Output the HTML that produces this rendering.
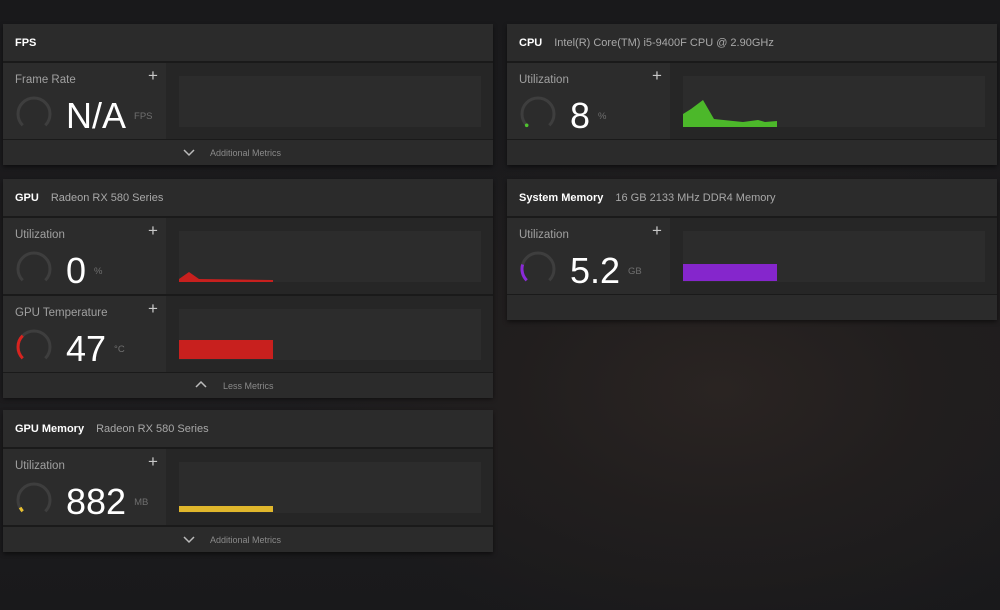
<!DOCTYPE html>
<html><head><meta charset="utf-8"><style>
*{margin:0;padding:0;box-sizing:border-box}
body{width:1000px;height:610px;overflow:hidden;font-family:"Liberation Sans",sans-serif;
background:radial-gradient(ellipse 420px 260px at 720px 390px,#2a2422 0%,#211e1e 50%,rgba(28,27,29,0) 100%),linear-gradient(#19191b,#1d1c1e 60%,#19191b);position:relative}
.p{position:absolute;width:490px;background:#1a1a1a;border-radius:2px;box-shadow:0 2px 4px rgba(0,0,0,.5)}
.h{position:absolute;left:0;right:0;top:0;height:37px;background:#2b2b2b;color:#fff;font-size:11px;font-weight:bold;padding:13px 0 0 12px}
.h span{font-weight:normal;color:#a8a8a8;margin-left:12px}
.r{position:absolute;left:0;right:0;height:76px;background:#262626}
.t{position:absolute;left:0;top:0;width:163px;height:76px;background:#2c2c2c}
.lb{position:absolute;left:12px;top:11px;font-size:11.5px;color:#a0a0a0}
.pl{position:absolute;left:145px;top:3px;font-size:17px;color:#c8c8c8;font-weight:300}
.g{position:absolute;left:13px;top:33px;width:36px;height:36px}
.v{position:absolute;left:63px;top:35px;font-size:36px;line-height:36px;color:#fff;white-space:nowrap}
.v small{font-size:9.5px;color:#6f6f6f;vertical-align:top;position:relative;top:1px;margin-left:8px}
.b{position:absolute;left:176px;top:13px;width:302px;height:51px;background:#2c2c2c}
.b svg{position:absolute;left:0;top:0}
.f{position:absolute;left:0;right:0;height:25px;background:#2b2b2b;font-size:9px;color:#8a8a8a}
.f .c{position:absolute;left:180px;top:7px;width:12px;height:10px}
.f .tx{position:absolute;left:207px;top:8px}
</style></head><body>

<!-- FPS -->
<div class="p" style="left:3px;top:24px;height:141px">
 <div class="h">FPS</div>
 <div class="r" style="top:39px"><div class="t"><div class="lb">Frame Rate</div><div class="pl">+</div>
  <svg class="g" viewBox="0 0 36 36"><path d="M6.7 29.3A16 16 0 1 1 29.3 29.3" fill="none" stroke="#3e3e3e" stroke-width="3"/></svg>
  <div class="v">N/A<small>FPS</small></div></div>
  <div class="b"></div></div>
 <div class="f" style="top:116px"><svg class="c" viewBox="0 0 12 10"><path d="M1 3l5 5 5-5" fill="none" stroke="#bbb" stroke-width="1.5"/></svg><div class="tx">Additional Metrics</div></div>
</div>

<!-- GPU -->
<div class="p" style="left:3px;top:179px;height:218px">
 <div class="h">GPU<span>Radeon RX 580 Series</span></div>
 <div class="r" style="top:39px"><div class="t"><div class="lb">Utilization</div><div class="pl">+</div>
  <svg class="g" viewBox="0 0 36 36"><path d="M6.7 29.3A16 16 0 1 1 29.3 29.3" fill="none" stroke="#3e3e3e" stroke-width="3"/></svg>
  <div class="v">0<small>%</small></div></div>
  <div class="b"><svg width="302" height="51"><polygon points="0,51 0,48 10,41 20,48 94,49 94,51" fill="#c8201e"/></svg></div></div>
 <div class="r" style="top:117px"><div class="t"><div class="lb">GPU Temperature</div><div class="pl">+</div>
  <svg class="g" viewBox="0 0 36 36"><path d="M6.7 29.3A16 16 0 1 1 29.3 29.3" fill="none" stroke="#3e3e3e" stroke-width="3"/><path d="M6.7 29.3A16 16 0 0 1 6.7 6.7" fill="none" stroke="#d8231f" stroke-width="3"/></svg>
  <div class="v">47<small>°C</small></div></div>
  <div class="b"><svg width="302" height="51"><rect x="0" y="31" width="94" height="19" fill="#c8201e"/></svg></div></div>
 <div class="f" style="top:194px"><svg class="c" viewBox="0 0 12 10" style="left:192px"><path d="M1 7l5-5 5 5" fill="none" stroke="#bbb" stroke-width="1.5"/></svg><div class="tx" style="left:220px">Less Metrics</div></div>
</div>

<!-- GPU Memory -->
<div class="p" style="left:3px;top:410px;height:142px">
 <div class="h">GPU Memory<span>Radeon RX 580 Series</span></div>
 <div class="r" style="top:39px"><div class="t"><div class="lb">Utilization</div><div class="pl">+</div>
  <svg class="g" viewBox="0 0 36 36"><path d="M6.7 29.3A16 16 0 1 1 29.3 29.3" fill="none" stroke="#3e3e3e" stroke-width="3"/><path d="M6.7 29.3A16 16 0 0 1 4.2 25.5" fill="none" stroke="#e8c030" stroke-width="3"/></svg>
  <div class="v">882<small>MB</small></div></div>
  <div class="b"><svg width="302" height="51"><rect x="0" y="44" width="94" height="6" fill="#e0b72c"/></svg></div></div>
 <div class="f" style="top:117px"><svg class="c" viewBox="0 0 12 10"><path d="M1 3l5 5 5-5" fill="none" stroke="#bbb" stroke-width="1.5"/></svg><div class="tx">Additional Metrics</div></div>
</div>

<!-- CPU -->
<div class="p" style="left:507px;top:24px;height:141px">
 <div class="h">CPU<span>Intel(R) Core(TM) i5-9400F CPU @ 2.90GHz</span></div>
 <div class="r" style="top:39px"><div class="t"><div class="lb">Utilization</div><div class="pl">+</div>
  <svg class="g" viewBox="0 0 36 36"><path d="M6.7 29.3A16 16 0 1 1 29.3 29.3" fill="none" stroke="#3e3e3e" stroke-width="3"/><circle cx="6.7" cy="29.3" r="1.8" fill="#4fc22f"/></svg>
  <div class="v">8<small>%</small></div></div>
  <div class="b"><svg width="302" height="51"><polygon points="0,51 0,38 8,33 20,24 31,43 50,45 60,46 75,44 82,46 94,45 94,51" fill="#4cb82a"/></svg></div></div>
 <div class="f" style="top:116px"></div>
</div>

<!-- System Memory -->
<div class="p" style="left:507px;top:179px;height:141px">
 <div class="h">System Memory<span>16 GB 2133 MHz DDR4 Memory</span></div>
 <div class="r" style="top:39px"><div class="t"><div class="lb">Utilization</div><div class="pl">+</div>
  <svg class="g" viewBox="0 0 36 36"><path d="M6.7 29.3A16 16 0 1 1 29.3 29.3" fill="none" stroke="#3e3e3e" stroke-width="3"/><path d="M6.7 29.3A16 16 0 0 1 2.6 13.5" fill="none" stroke="#8a2ad8" stroke-width="3"/></svg>
  <div class="v">5.2<small>GB</small></div></div>
  <div class="b"><svg width="302" height="51"><rect x="0" y="33" width="94" height="17" fill="#8526cc"/></svg></div></div>
 <div class="f" style="top:116px"></div>
</div>
</body></html>
